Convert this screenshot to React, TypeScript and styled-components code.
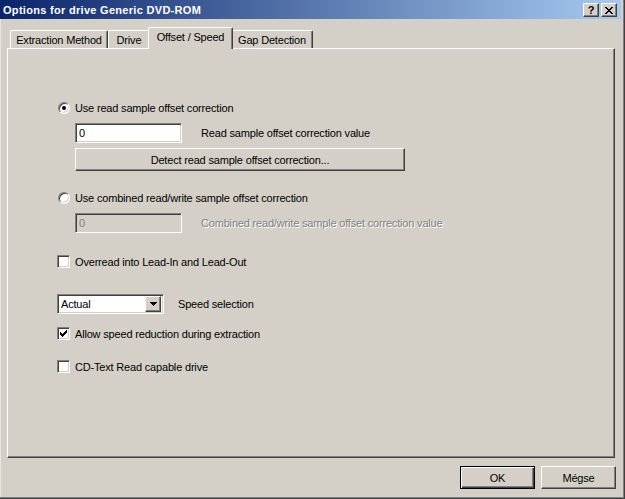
import React from "react";
import styled, { createGlobalStyle, css } from "styled-components";

const Global = createGlobalStyle`
  html, body { margin: 0; padding: 0; background: #d4d0c8; overflow: hidden; }
  * { box-sizing: border-box; }
`;

const FONT = `"Liberation Sans", Arial, sans-serif`;

const Window = styled.div`
  width: 625px;
  height: 499px;
  display: flex;
  flex-direction: column;
  background: #d4d0c8;
  padding: 0 4px 4px 0;
  box-shadow: inset -1px -1px #404040, inset -2px -2px #808080, inset 1px 0 #e8e6e0;
  font-family: ${FONT};
  font-size: 11px;
  letter-spacing: -0.18px;
  color: #000;
`;

const TitleBar = styled.div`
  height: 19px;
  display: flex;
  align-items: center;
  padding: 0 4px 0 3px;
  background: linear-gradient(to right, #0a246a, #a6caf0);
`;

const Title = styled.div`
  flex: 1;
  color: #fff;
  font-weight: bold;
  font-size: 11px;
  letter-spacing: 0.3px;
`;

const raised = css`
  background: #d4d0c8;
  border: 1px solid;
  border-color: #fff #404040 #404040 #fff;
  box-shadow: inset -1px -1px #808080;
`;

const sunken = css`
  border: 1px solid;
  border-color: #808080 #fff #fff #808080;
  box-shadow: inset 1px 1px #404040, inset -1px -1px #d4d0c8;
`;

const CaptionButtons = styled.div`
  display: flex;
  gap: 2px;
  margin-top: 1px;
`;

const CaptionButton = styled.div`
  ${raised};
  width: 16px;
  height: 14px;
  display: flex;
  align-items: center;
  justify-content: center;
  font-weight: bold;
  font-size: 11px;
  line-height: 1;
`;

const Body = styled.div`
  flex: 1;
  display: flex;
  flex-direction: column;
  padding: 8px 6px 0 7px;
`;

const TabStrip = styled.div`
  display: flex;
  align-items: flex-end;
  height: 21px;
  padding-left: 3px;
  position: relative;
  z-index: 1;
`;

const Tab = styled.div<{ $w: number; $active?: boolean }>`
  width: ${(p) => p.$w + (p.$active ? 4 : 0)}px;
  height: ${(p) => (p.$active ? 22 : 18)}px;
  margin: ${(p) => (p.$active ? "0 -2px -1px -2px" : "0")};
  padding-bottom: ${(p) => (p.$active ? 3 : 0)}px;
  background: #d4d0c8;
  border-top: 1px solid #fff;
  border-left: 1px solid #fff;
  border-right: 1px solid #404040;
  border-top-left-radius: 2px;
  border-top-right-radius: 2px;
  box-shadow: inset -1px 0 #808080;
  display: flex;
  align-items: center;
  justify-content: center;
  white-space: nowrap;
  position: relative;
  z-index: ${(p) => (p.$active ? 2 : 0)};
`;

const Panel = styled.div`
  height: 410px;
  border: 1px solid;
  border-color: #fff #404040 #404040 #fff;
  box-shadow: inset -1px -1px #808080;
  padding: 52px 0 0 49px;
  display: flex;
  flex-direction: column;
  align-items: flex-start;
`;

const OptionRow = styled.label<{ $mt?: number }>`
  display: flex;
  align-items: center;
  height: 13px;
  gap: 5px;
  margin-top: ${(p) => p.$mt ?? 0}px;
  white-space: nowrap;
`;

const Radio = styled.span<{ $checked?: boolean }>`
  width: 12px;
  height: 12px;
  margin-left: 1px;
  border-radius: 50%;
  background: #fff;
  ${sunken};
  display: flex;
  align-items: center;
  justify-content: center;
  &::after {
    content: "";
    width: 4px;
    height: 4px;
    border-radius: 50%;
    background: ${(p) => (p.$checked ? "#000" : "transparent")};
  }
`;

const CheckBox = styled.span`
  width: 13px;
  height: 13px;
  background: #fff;
  ${sunken};
  display: flex;
  align-items: center;
  justify-content: center;
`;

const FieldRow = styled.div<{ $mt?: number; $indent?: number; $gap: number }>`
  display: flex;
  align-items: center;
  gap: ${(p) => p.$gap}px;
  margin-top: ${(p) => p.$mt ?? 0}px;
  margin-left: ${(p) => p.$indent ?? 0}px;
  white-space: nowrap;
`;

const TextInput = styled.div<{ $disabled?: boolean }>`
  width: 107px;
  height: 20px;
  ${sunken};
  background: ${(p) => (p.$disabled ? "#d4d0c8" : "#fff")};
  color: ${(p) => (p.$disabled ? "#808080" : "#000")};
  display: flex;
  align-items: center;
  padding-left: 3px;
`;

const FieldLabel = styled.span<{ $disabled?: boolean }>`
  color: ${(p) => (p.$disabled ? "#808080" : "#000")};
  text-shadow: ${(p) => (p.$disabled ? "1px 1px #fff" : "none")};
`;

const WideButton = styled.div`
  ${raised};
  width: 330px;
  height: 23px;
  margin: 5px 0 0 18px;
  display: flex;
  align-items: center;
  justify-content: center;
`;

const Select = styled.div`
  width: 107px;
  height: 20px;
  ${sunken};
  background: #fff;
  display: flex;
  align-items: center;
  padding: 2px 2px 2px 3px;
`;

const SelectValue = styled.span`
  flex: 1;
`;

const DropButton = styled.span`
  ${raised};
  width: 16px;
  height: 16px;
  display: flex;
  align-items: center;
  justify-content: center;
`;

const Footer = styled.div`
  display: flex;
  justify-content: flex-end;
  gap: 6px;
  margin-top: 8px;
  margin-right: -1px;
`;

const DialogButton = styled.div<{ $default?: boolean }>`
  width: 75px;
  height: 23px;
  display: flex;
  align-items: center;
  justify-content: center;
  background: #d4d0c8;
  ${(p) =>
    p.$default
      ? css`
          border: 1px solid #000;
          box-shadow: inset 1px 1px #fff, inset -1px -1px #404040, inset -2px -2px #808080;
        `
      : css`
          border: 1px solid;
          border-color: #fff #404040 #404040 #fff;
          box-shadow: inset -1px -1px #808080;
        `}
`;

const CheckMark = () => (
  <svg width="7" height="7" viewBox="0 0 7 7" shapeRendering="crispEdges">
    {[2, 3, 4, 3, 2, 1, 0].map((top, i) => (
      <rect key={i} x={i} y={top} width="1" height="3" fill="#000" />
    ))}
  </svg>
);

const DownArrow = () => (
  <svg width="7" height="4" viewBox="0 0 7 4" shapeRendering="crispEdges">
    <path d="M0 0h7v1h-1v1h-1v1h-1v1h-1v-1h-1v-1h-1v-1h-1z" fill="#000" />
  </svg>
);

const CloseGlyph = () => (
  <svg width="8" height="7" viewBox="0 0 8 7" shapeRendering="crispEdges">
    <path
      d="M0 0h2v1h1v1h2v-1h1v-1h2v1h-1v1h-1v1h-1v1h1v1h1v1h1v1h-2v-1h-1v-1h-2v1h-1v1h-2v-1h1v-1h1v-1h1v-1h-1v-1h-1v-1h-1z"
      fill="#000"
    />
  </svg>
);

const tabs = [
  { label: "Extraction Method", w: 98 },
  { label: "Drive", w: 42 },
  { label: "Offset / Speed", w: 81, active: true },
  { label: "Gap Detection", w: 82 },
];

export default function App() {
  return (
    <>
      <Global />
      <Window>
        <TitleBar>
          <Title>Options for drive Generic DVD-ROM</Title>
          <CaptionButtons>
            <CaptionButton>?</CaptionButton>
            <CaptionButton>
              <CloseGlyph />
            </CaptionButton>
          </CaptionButtons>
        </TitleBar>
        <Body>
          <TabStrip>
            {tabs.map((t) => (
              <Tab key={t.label} $w={t.w} $active={t.active}>
                {t.label}
              </Tab>
            ))}
          </TabStrip>
          <Panel>
            <OptionRow>
              <Radio $checked />
              Use read sample offset correction
            </OptionRow>
            <FieldRow $mt={9} $indent={18} $gap={19}>
              <TextInput>0</TextInput>
              <FieldLabel>Read sample offset correction value</FieldLabel>
            </FieldRow>
            <WideButton>Detect read sample offset correction...</WideButton>
            <OptionRow $mt={20}>
              <Radio />
              Use combined read/write sample offset correction
            </OptionRow>
            <FieldRow $mt={9} $indent={18} $gap={19}>
              <TextInput $disabled>0</TextInput>
              <FieldLabel $disabled>Combined read/write sample offset correction value</FieldLabel>
            </FieldRow>
            <OptionRow $mt={22}>
              <CheckBox />
              Overread into Lead-In and Lead-Out
            </OptionRow>
            <FieldRow $mt={26} $gap={14}>
              <Select>
                <SelectValue>Actual</SelectValue>
                <DropButton>
                  <DownArrow />
                </DropButton>
              </Select>
              <FieldLabel>Speed selection</FieldLabel>
            </FieldRow>
            <OptionRow $mt={13}>
              <CheckBox>
                <CheckMark />
              </CheckBox>
              Allow speed reduction during extraction
            </OptionRow>
            <OptionRow $mt={20}>
              <CheckBox />
              CD-Text Read capable drive
            </OptionRow>
          </Panel>
          <Footer>
            <DialogButton $default>OK</DialogButton>
            <DialogButton>Mégse</DialogButton>
          </Footer>
        </Body>
      </Window>
    </>
  );
}
